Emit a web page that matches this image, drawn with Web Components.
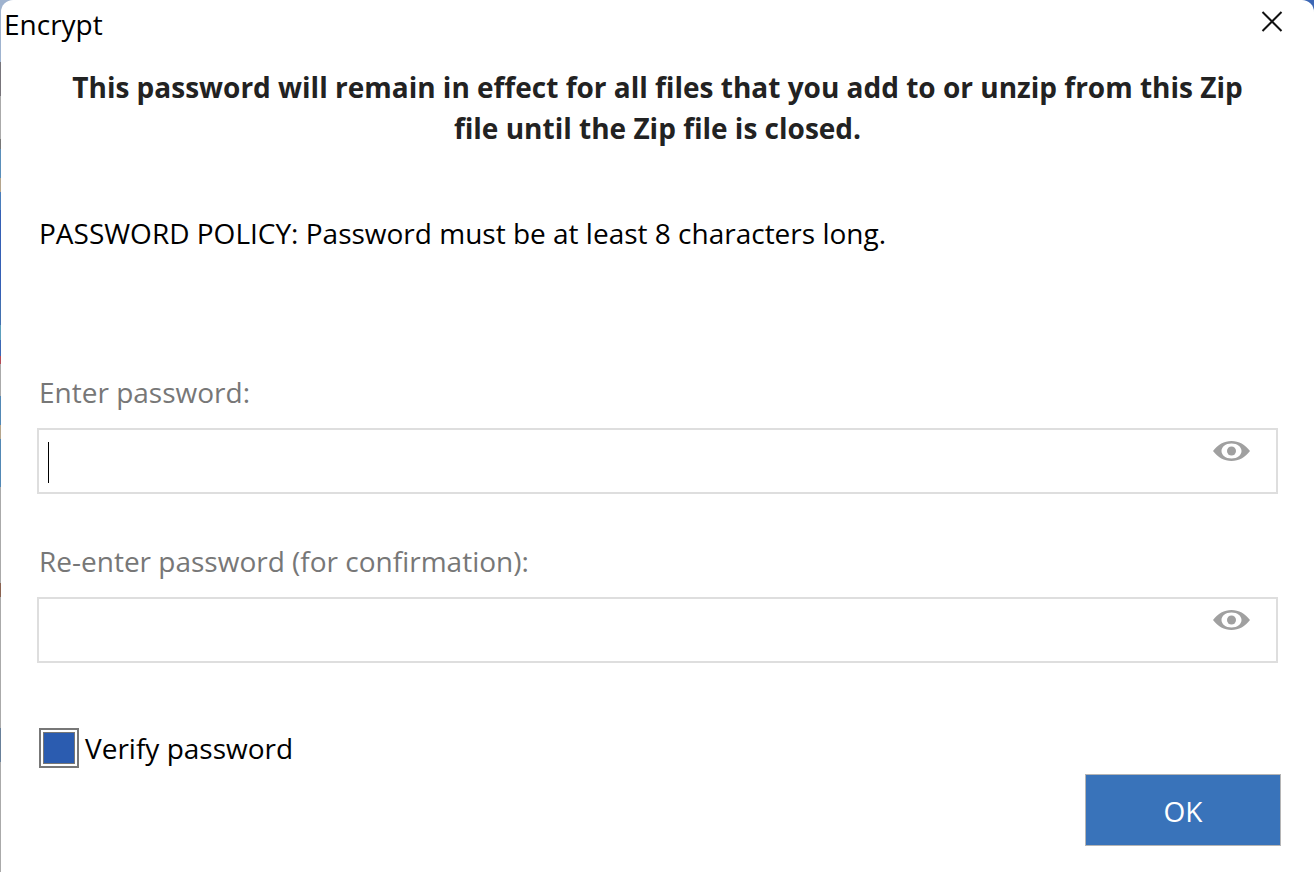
<!DOCTYPE html>
<html lang="en">
<head>
<meta charset="utf-8">
<title>Encrypt</title>
<style>
  html {
    font-family: "Open Sans", "Noto Sans", sans-serif;
    font-size: 28px;
    line-height: 40px;
    color: #000;
  }

  body {
    margin: 0;
    background:
      linear-gradient(#3c67b5, #3c67b5) top right / 20px 20px no-repeat,
      linear-gradient(to bottom,
        #9fb3cf 0 62px, #77747a 62px 96px, #aaa 96px 139px, #777 139px 149px,
        #5a8fba 149px 178px, #b5a58c 178px 192px, #4a7dbb 192px 210px,
        #3560b5 210px 300px, #4270b0 300px 325px, #5c9fbc 325px 340px,
        #3c67b5 340px 356px, #b54a55 356px 364px, #aaa 364px 396px,
        #5288b5 396px 425px, #b5a58c 425px 439px, #5288b5 439px 487px,
        #aaa 487px 583px, #8a6250 583px 597px, #aaa 597px 728px,
        #68809a 728px 762px, #aaa 762px);
  }
</style>
</head>
<body>
<encrypt-dialog>
  <span slot="title">Encrypt</span>
  <span slot="notice">This password will remain in effect for all files that you add to or unzip from this Zip file until the Zip file is closed.</span>
  <span slot="policy">PASSWORD POLICY: Password must be at least 8 characters long.</span>
  <password-field active>Enter password:</password-field>
  <password-field>Re-enter password (for confirmation):</password-field>
  <check-option slot="option" checked>Verify password</check-option>
  <push-button slot="action">OK</push-button>
</encrypt-dialog>

<template id="encrypt-dialog">
  <style>
    :host {
      display: flex;
      flex-direction: column;
      box-sizing: border-box;
      min-height: 100vh;
      margin-left: 1px;
      border-radius: 12px 12px 0 0;
      background: #fff;
    }

    header {
      display: flex;
      justify-content: space-between;
      align-items: flex-start;
      padding: 4px 24px 0 3px;
    }

    h1, h2, p {
      margin: 0;
      font-size: inherit;
    }

    h1 {
      font-weight: 400;
    }

    .close {
      display: flex;
      padding: 0;
      border: 0;
      background: none;
    }

    main {
      padding: 23px 36px 0;
    }

    h2 {
      padding: 0 16px;
      line-height: 41px;
      text-align: center;
      color: #222;
    }

    .policy {
      margin: 64px 2px 0;
    }

    .fields {
      display: flex;
      flex-direction: column;
      gap: 47px;
      margin-top: 119px;
    }

    footer {
      display: grid;
      grid-template-columns: 1fr auto;
      padding: 65px 33px 26px 38px;
    }

    .action {
      margin-top: 46px;
    }
  </style>

  <header>
    <h1><slot name="title"></slot></h1>
    <button class="close" type="button" aria-label="Close">
      <svg width="36" height="36" viewBox="0 0 36 36" fill="none" stroke="#111" stroke-width="2">
        <path d="M8.500 8L27.500 27M27.500 8L8.500 27"/>
      </svg>
    </button>
  </header>
  <main>
    <h2><slot name="notice"></slot></h2>
    <p class="policy"><slot name="policy"></slot></p>
    <div class="fields"><slot></slot></div>
  </main>
  <footer>
    <slot name="option"></slot>
    <div class="action"><slot name="action"></slot></div>
  </footer>
</template>

<template id="password-field">
  <style>
    :host {
      display: block;
    }

    label {
      display: block;
      margin: 0 2px 16px;
      color: #777;
    }

    .box {
      display: flex;
      align-items: flex-start;
      position: relative;
      border: 2px solid #dedede;
      background: #fff;
    }

    input {
      flex: 1;
      min-width: 0;
      height: 62px;
      box-sizing: border-box;
      padding: 0 10px;
      border: 0;
      outline: 0;
      background: none;
      font: inherit;
    }

    button {
      display: flex;
      margin: 10px 26px 0 0;
      padding: 0;
      border: 0;
      background: none;
    }

    .caret {
      display: none;
      position: absolute;
      left: 9px;
      top: 12px;
      width: 1px;
      height: 41px;
      background: #000;
    }

    :host([active]) .caret {
      display: block;
    }
  </style>

  <label for="password"><slot></slot></label>
  <div class="box">
    <input id="password" type="password">
    <span class="caret"></span>
    <button type="button" aria-label="Show password">
      <svg width="37" height="22" viewBox="0 0 37 22">
        <path fill="#a0a0a0" fill-rule="evenodd" d="M0 11C5 4.500 11 1 18.500 1S32 4.500 37 11C32 17.500 26 21 18.500 21S5 17.500 0 11ZM18.500 3.500C12.500 3.500 8.500 7 8.500 11S12.500 18.500 18.500 18.500S28.500 15 28.500 11S24.500 3.500 18.500 3.500Z"/>
        <circle cx="18.500" cy="11" r="4.500" fill="#a0a0a0"/>
      </svg>
    </button>
  </div>
</template>

<template id="check-option">
  <style>
    :host {
      display: block;
    }

    label {
      display: inline-flex;
      align-items: center;
      gap: 6px;
    }

    input {
      appearance: none;
      width: 40px;
      height: 40px;
      margin: 0;
      padding: 2px;
      border: 2px solid #777;
      background: #fff;
    }

    input:checked::before {
      content: "";
      display: block;
      box-sizing: border-box;
      height: 32px;
      border: 1px solid #777;
      background: #2b5cb0;
    }
  </style>

  <label><input type="checkbox"><span><slot></slot></span></label>
</template>

<template id="push-button">
  <style>
    :host {
      display: block;
    }

    button {
      width: 196px;
      height: 72px;
      padding: 2px 0 0;
      border: 1px solid #b5b5b5;
      background: #3973ba;
      color: #fff;
      font: inherit;
    }
  </style>

  <button type="button"><slot></slot></button>
</template>

<script>
  class TemplateElement extends HTMLElement {
    constructor() {
      super();
      const template = document.getElementById(this.localName);
      this.attachShadow({ mode: 'open' });
      this.shadowRoot.appendChild(template.content.cloneNode(true));
    }
  }

  customElements.define('encrypt-dialog', class EncryptDialog extends TemplateElement {});

  customElements.define(
    'password-field',
    class PasswordField extends TemplateElement {
      connectedCallback() {
        const input = this.shadowRoot.querySelector('input');
        this.shadowRoot.querySelector('button').addEventListener('click', () => {
          input.type = input.type === 'password' ? 'text' : 'password';
        });
        input.addEventListener('focus', () => this.removeAttribute('active'));
      }
    }
  );

  customElements.define(
    'check-option',
    class CheckOption extends TemplateElement {
      connectedCallback() {
        this.shadowRoot.querySelector('input').checked = this.hasAttribute('checked');
      }
    }
  );

  customElements.define('push-button', class PushButton extends TemplateElement {});
</script>
</body>
</html>
